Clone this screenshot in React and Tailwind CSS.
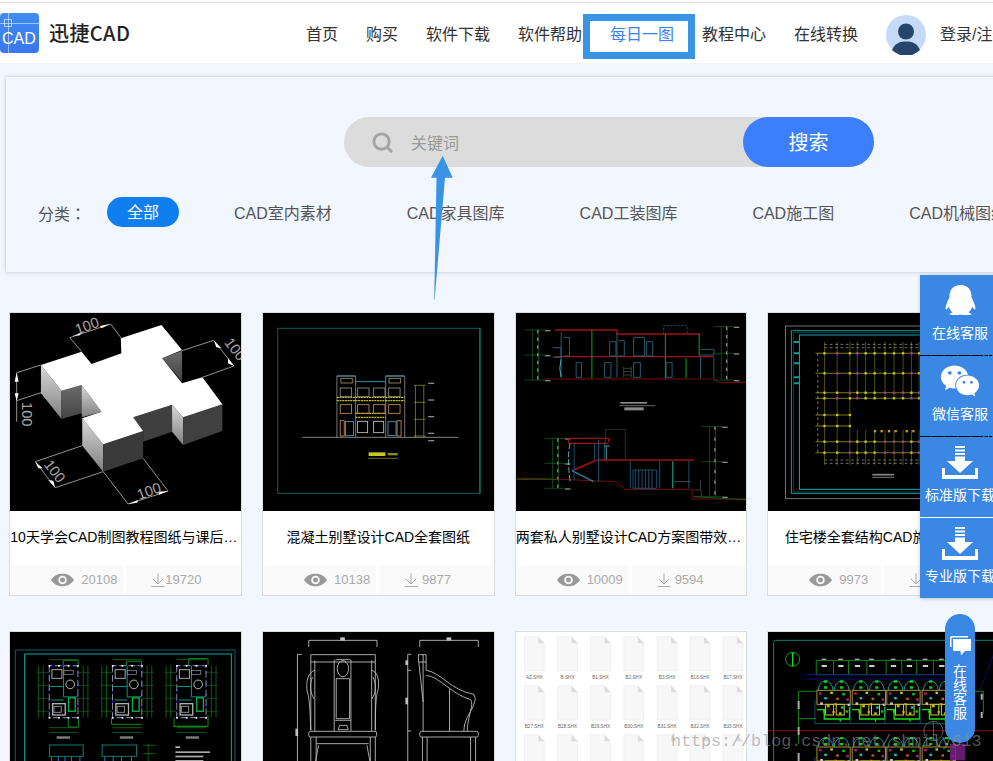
import React from "react";
import { Search } from "lucide-react";
import { FaQq, FaWeixin } from "react-icons/fa";

const range = (a, n, s) => Array.from({ length: n }, (_, i) => a + i * s);

function Frame({ box, children, bg = "#000" }) {
  return (
    <svg viewBox={box} className="block w-full h-full" preserveAspectRatio="none" style={{ background: bg }}>
      {children}
    </svg>
  );
}

function Img1() {
  const W = "#b8b8b8";
  return (
    <Frame box="30 39 693 594">
      <defs>
        <linearGradient id="g1" x1="0" x2="0" y1="0" y2="1"><stop offset="0" stopColor="#d8d8d8" /><stop offset="1" stopColor="#808080" /></linearGradient>
        <linearGradient id="g2" x1="0" x2="0" y1="0" y2="1"><stop offset="0" stopColor="#6a6a6a" /><stop offset="1" stopColor="#444" /></linearGradient>
      </defs>
      <polygon points="123,195 185,272 185,357 123,280" fill="url(#g1)" />
      <polygon points="185,272 245,255 245,340 185,357" fill="url(#g2)" />
      <polygon points="245,255 305,335 247,352 245,340" fill="url(#g1)" />
      <polygon points="247,355 310,433 310,515 247,437" fill="url(#g1)" />
      <polygon points="310,433 430,393 430,475 310,515" fill="#3a3a3a" />
      <polygon points="400,352 517,314 517,395 430,425 430,393" fill="#3f3f3f" />
      <polygon points="517,314 550,352 550,435 517,395" fill="url(#g1)" />
      <polygon points="550,352 668,313 668,393 550,435" fill="#404040" />
      <polygon points="363,115 392,152 365,162" fill="#a0a0a0" />
      <polygon points="487,175 547,152 547,245" fill="url(#g2)" />
      <polygon fill="#fff" points="123,195 245,155 275,192 365,160 363,115 485,75 547,150 487,175 547,250 608,232 668,313 550,352 517,314 400,352 430,393 310,433 247,355 305,335 245,255 185,272" />
      <g stroke={W} strokeWidth="2.4" fill="none">
        <path d="M210,113 L332,72 L365,115 M210,113 L245,155" />
        <path d="M547,152 L642,121 L703,198 L608,232" />
        <path d="M123,195 L50,218 L50,365 M123,278 L50,302" />
        <path d="M247,437 L106,485 L166,563 L310,515" />
        <path d="M310,515 L385,612 L505,573 L430,475" />
      </g>
      <g fill="#fff">
        <polygon points="218,108 245,98 240,106" /><polygon points="300,78 330,72 305,85" />
        <polygon points="642,121 665,145 650,142" /><polygon points="685,175 703,198 685,190" />
        <polygon points="50,218 56,245 44,245" /><polygon points="50,302 56,280 44,280" />
        <polygon points="106,485 128,505 115,505" /><polygon points="166,563 145,540 160,542" />
        <polygon points="385,612 415,600 412,608" /><polygon points="505,573 475,575 478,584" />
      </g>
      <g fill="#a8a8a8" fontFamily="Liberation Sans, sans-serif" fontSize="44">
        <text x="232" y="104" transform="rotate(-20 232 104)">100</text>
        <text x="672" y="128" transform="rotate(52 672 128)">100</text>
        <text x="66" y="306" transform="rotate(90 66 306)">100</text>
        <text x="130" y="494" transform="rotate(52 130 494)">100</text>
        <text x="418" y="600" transform="rotate(-20 418 600)">100</text>
      </g>
    </Frame>
  );
}

function Img2() {
  return (
    <Frame box="789 39 690 594">
      <rect x="833" y="85" width="605" height="495" fill="none" stroke="#0b5f60" strokeWidth="3" />
      <path d="M1438,85 V580" stroke="#1a8a6a" strokeWidth="3" />
      <path d="M907,412 H1373" stroke="#9a9a9a" strokeWidth="2.5" />
      <g fill="none" strokeWidth="2.5">
        <path d="M1010,412 V228 H1066 V412 M1156,412 V228 H1213 V412" stroke="#8a8a8a" />
        <path d="M1010,228 H1066 M1156,228 H1213 M1066,245 H1156" stroke="#3aa6c0" />
        <path d="M1010,292 H1213 M1010,302 H1213 M1066,340 H1156 M1066,352 H1156" stroke="#c0c020" strokeWidth="4" strokeDasharray="6 2" />
        {[1020, 1072, 1120, 1165].map((x) => <rect key={x} x={x} y="264" width="34" height="26" stroke="#8f8f8f" />)}
        {[1020, 1072, 1120, 1165].map((x) => <rect key={x} x={x} y="314" width="34" height="26" stroke="#c98f5c" />)}
        {[1072, 1120].map((x) => <rect key={x} x={x} y="364" width="30" height="34" stroke="#c9c9b8" />)}
        <rect x="1022" y="235" width="34" height="14" stroke="#a88c70" />
        <rect x="1166" y="235" width="34" height="14" stroke="#a88c70" />
        <rect x="1036" y="365" width="24" height="42" stroke="#5aa0c0" />
        <rect x="1163" y="365" width="24" height="42" stroke="#5aa0c0" />
        <rect x="1020" y="362" width="12" height="46" stroke="#c98f5c" />
        <rect x="1190" y="362" width="12" height="46" stroke="#c98f5c" />
        <path d="M1245,256 V412 M1270,256 V412 M1240,256 H1275 M1240,307 H1275 M1240,358 H1275 M1240,408 H1275" stroke="#a0a020" strokeWidth="2" />
      </g>
      <g fill="#8a8a8a">
        {[248, 298, 348, 398, 420].map((y) => <rect key={y} x="1283" y={y} width="18" height="4" />)}
      </g>
      <rect x="1105" y="457" width="50" height="11" fill="#c8c820" />
      <rect x="1162" y="459" width="30" height="7" fill="#8a8a20" />
      <path d="M1104,475 H1192" stroke="#a0a020" strokeWidth="2" />
    </Frame>
  );
}

function Img3() {
  const dimCols = [[115, 90, 240], [680, 80, 240], [175, 415, 565], [645, 380, 590]];
  return (
    <Frame box="48 39 690 594">
      <g fill="none" strokeWidth="2.5">
        <path d="M130,237 H640 L655,247 H738" stroke="#8c1010" />
        <path d="M165,90 H350 V102 H600 M165,170 H640" stroke="#a01018" strokeWidth="4" />
        <path d="M275,90 V235 M495,102 V235 M596,102 V168 M557,175 V235" stroke="#0f8a22" strokeWidth="3.5" />
        <path d="M183,95 V232 M350,100 V232 M600,170 V235 M640,172 V235 M190,112 H208 V168 H190 M328,125 H347 V168 H328 V125 M355,122 H372 V168 H355 M400,112 H432 V168 H400 Z M438,125 H457 V168 H438 Z M228,188 H244 V232 H228 Z M313,188 H332 V232 H313 Z M400,188 H420 V232 H400 Z M497,188 H515 V232 H497 Z M158,143 H183 V172 H158 M600,148 H640 V165 H600" stroke="#2c6e86" />
        <path d="M490,102 V77 H560 V102" stroke="#1c5b78" strokeDasharray="7 4" />
        <path d="M183,178 Q175,205 183,232" stroke="#58c8d8" />
        <path d="M370,205 H393 M370,215 H393 M370,225 H393 M370,200 V232 M393,200 V232" stroke="#444" />
        <path d="M357,317 H465" stroke="#a0a0a0" strokeWidth="2" />
      </g>
      <g fill="#8a8a8a">
        <rect x="360" y="306" width="80" height="5" />
        <rect x="372" y="322" width="58" height="9" />
      </g>
      {dimCols.map(([x, y1, y2], i) => (
        <g key={i}>
          <path d={`M${x},${y1} V${y2} M${x - 18},${y1} V${y2} M${x - 42},${y1} H${x + 20} M${x - 42},${(y1 + y2) / 2} H${x + 20} M${x - 42},${y2} H${x + 20}`} stroke="#0d6a1e" strokeWidth="2" fill="none" />
          {range(y1, 7, (y2 - y1) / 6.5).map((y) => <rect key={y} x={x - 4} y={y} width="4" height="10" fill="#8a8a8a" />)}
          <rect x={x + 20} y={y1} width="16" height="4" fill="#8a8a8a" />
          <rect x={x + 20} y={(y1 + y2) / 2} width="16" height="4" fill="#8a8a8a" />
          <rect x={x + 20} y={y2} width="16" height="4" fill="#8a8a8a" />
        </g>
      ))}
      <g fill="none" strokeWidth="2.5">
        <path d="M50,535 H110 L345,545 L375,568 H575 V597 H738" stroke="#8c1010" />
        <path d="M205,430 V415 H325 V425 M290,480 H580 M205,430 H325" stroke="#a01018" strokeWidth="4" />
        <path d="M215,512 L290,480" stroke="#a01018" strokeWidth="5" />
        <path d="M215,512 L280,545" stroke="#2e7ea0" strokeWidth="4" />
        <path d="M222,430 V540 M283,430 V480 M295,420 V545 M312,425 V478 M390,482 V565 M478,482 V565 M565,482 V565 M398,510 H468 V565 H398 Z M405,510 V565 M415,510 V565 M425,510 V565 M435,510 V565 M445,510 V565 M455,510 V565" stroke="#1e5f80" />
        <path d="M210,430 Q200,470 210,545" stroke="#58c8d8" strokeDasharray="18 6" />
        <path d="M316,388 H375 V478 M316,388 V428" stroke="#333" />
        <path d="M312,438 H328 M318,440 V478" stroke="#58c8d8" />
        <path d="M517,484 V565" stroke="#19d8a8" />
        <path d="M520,545 H570" stroke="#555" />
        <path d="M50,538 H170 M580,590 L738,600 " stroke="#0d6a1e" />
        <path d="M580,570 H602 V590 H580 M600,540 V570" stroke="#444" />
      </g>
    </Frame>
  );
}

function Img4() {
  const xs = [972, 1010, 1048, 1070, 1095, 1122, 1153, 1180, 1207, 1232, 1255, 1290, 1330, 1370, 1410, 1450];
  const ys = [160, 220, 278, 295, 425, 458];
  const ysShort = [345, 378];
  return (
    <Frame box="803 39 690 594">
      <g fill="none">
        <rect x="855" y="78" width="620" height="518" stroke="#8a8a8a" strokeWidth="2.5" />
        <rect x="873" y="92" width="590" height="488" stroke="#0f9a9a" strokeWidth="3" />
        <rect x="880" y="98" width="575" height="478" stroke="#0c5a5a" strokeWidth="2" />
        <rect x="897" y="105" width="550" height="463" stroke="#10a8a8" strokeWidth="3" />
        <path d="M880,126 H896 M880,160 H896 M880,190 H896 M880,232 H896 M880,250 H896" stroke="#0f9a9a" strokeWidth="6" />
        {xs.map((x, i) => <path key={x} d={i < 3 ? `M${x},125 V495` : `M${x},125 V295 M${x},390 V495`} stroke="#5c5c10" strokeWidth="2.5" />)}
        {ys.map((y) => <path key={y} d={`M945,${y} H1493`} stroke="#7a7a14" strokeWidth="3" />)}
        {ysShort.map((y) => <path key={y} d={`M945,${y} H1050`} stroke="#7a7a14" strokeWidth="3" />)}
        <path d="M972,133 H1493 M972,143 H1493 M972,480 H1493 M972,490 H1493 M952,160 V462" stroke="#a8a8a8" strokeWidth="2" strokeDasharray="8 8" />
        <path d="M1115,532 H1180" stroke="#bbb" strokeWidth="2" />
        <path d="M1115,524 H1180" stroke="#888" strokeWidth="5" />
      </g>
      {xs.flatMap((x) => ys.map((y) => <rect key={`${x}-${y}`} x={x - 3.5} y={y - 3.5} width="7" height="7" fill={(x + y) % 3 ? "#c8c820" : "#a838a8"} />))}
      {xs.slice(0, 3).flatMap((x) => ysShort.map((y) => <rect key={`${x}-${y}`} x={x - 3.5} y={y - 3.5} width="7" height="7" fill="#c8c820" />))}
      {[1123, 1143, 1165, 1185, 1218, 1238].map((x) => <rect key={x} x={x - 3.5} y="390" width="7" height="7" fill="#c8a020" />)}
    </Frame>
  );
}

function Plan({ x, y, w, h }) {
  return (
    <g>
      <path d={`M${x - 32},${y} V${y + h} M${x - 18},${y} V${y + h} M${x + w + 16},${y} V${y + h} M${x + w + 30},${y} V${y + h} M${x},${y - 18} H${x + w} M${x},${y + h + 30} H${x + w} M${x},${y + h + 44} H${x + w}`} stroke="#0f8a22" strokeWidth="2" fill="none" />
      {range(y + 20, 4, h / 4).map((yy) => <path key={yy} d={`M${x - 36},${yy} H${x} M${x + w},${yy} H${x + w + 34}`} stroke="#0c6a1c" strokeWidth="2" />)}
      <rect x={x} y={y} width={w} height={h} fill="none" stroke="#1818b8" strokeWidth="4" strokeDasharray="10 24" />
      <path d={`M${x},${y} V${y + h} H${x + w} V${y} H${x}`} fill="none" stroke="#c8c8c8" strokeWidth="2" strokeDasharray="20 8" />
      <path d={`M${x + w * 0.5},${y} V${y + h * 0.6} M${x},${y + h * 0.4} H${x + w * 0.5} M${x + w * 0.5},${y + h * 0.6} H${x + w} M${x + 6},${y + h * 0.66} H${x + w * 0.5}`} stroke="#0c9888" strokeWidth="3" fill="none" />
      <rect x={x + 8} y={y + 12} width="30" height="26" fill="none" stroke="#a8a8a8" strokeWidth="3" />
      <rect x={x + 10} y={y + h - 42} width="38" height="34" fill="none" stroke="#b0b0b0" strokeWidth="4" />
      <rect x={x + 14} y={y + h - 34} width="22" height="18" fill="none" stroke="#888" strokeWidth="3" />
      <rect x={x + w - 28} y={y + h * 0.62} width="20" height="40" fill="none" stroke="#10b040" strokeWidth="4" />
      <circle cx={x + w * 0.73} cy={y + h * 0.36} r="13" fill="none" stroke="#b8b8b8" strokeWidth="3" />
      <rect x={x + 44} y={y + 14} width="28" height="12" fill="none" stroke="#999" strokeWidth="2" />
      {range(x, 4, w / 3).flatMap((xx) => [y, y + h].map((yy) => <rect key={`${xx}${yy}`} x={xx - 2} y={yy - 2} width="5" height="5" fill="#fff" />))}
    </g>
  );
}

function Img5() {
  return (
    <Frame box="30 65 693 594">
      <rect x="46" y="119" width="660" height="500" fill="none" stroke="#0b5f60" strokeWidth="3" />
      <rect x="74" y="131" width="621" height="480" fill="none" stroke="#10a8a8" strokeWidth="3" />
      <Plan x={148} y={166} w={86} h={156} />
      <Plan x={338} y={166} w={88} h={156} />
      <Plan x={531} y={166} w={88} h={156} />
      <path d="M190,165 V150 H235 V165 M380,165 V153 H425 V165 M567,165 V145 H625 V165 M205,325 V350 H236 V325 M335,322 V342 H425 M523,322 V348 H625 V315 M520,348 H625" fill="none" stroke="#0f8a22" strokeWidth="3" />
      <rect x="170" y="378" width="40" height="7" fill="#808080" />
      <rect x="360" y="378" width="40" height="7" fill="#808080" />
      <rect x="558" y="378" width="40" height="7" fill="#808080" />
      <rect x="149" y="404" width="101" height="34" fill="none" stroke="#0e7a70" strokeWidth="3" />
      <rect x="307" y="404" width="103" height="34" fill="none" stroke="#0e7a70" strokeWidth="3" />
      <path d="M155,438 V453 M175,438 V453 M195,438 V453 M215,438 V453 M240,438 V453 M315,438 V453 M340,438 V453 M365,438 V453 M395,438 V453" stroke="#2a7ac0" strokeWidth="3" />
      <path d="M430,405 H468 M430,430 H468 M445,400 V453" stroke="#0f8a22" strokeWidth="2" />
      <rect x="527" y="408" width="14" height="5" fill="#bbb" />
      <rect x="527" y="423" width="104" height="5" fill="#aaa" />
      <rect x="527" y="436" width="84" height="5" fill="#aaa" />
      <rect x="527" y="449" width="84" height="5" fill="#aaa" />
    </Frame>
  );
}

function Img6() {
  return (
    <Frame box="789 65 690 594">
      <g fill="none" stroke="#c8c8c8" strokeWidth="2.5">
        <path d="M926,110 V90 H1130 V110 M1258,110 V90 H1433 V110" />
        <path d="M892,132 H905 M892,132 V460 M1222,132 H1232 M1222,132 V460 M1222,180 H1232 M1222,362 H1232" />
        <path d="M932,133 H1125 V155 H932 Z M944,150 V362 M1114,150 V362 M1002,148 V362 M1052,148 V362 M1006,148 H1050" />
        <ellipse cx="1028" cy="175" rx="17" ry="24" />
        <path d="M1008,205 H1048 V325 H1008 Z M1005,330 H1052" />
        <path d="M1014,358 L1018,345 H1040 L1044,358 Z" />
        <path d="M932,155 V360 M944,180 C925,185 915,215 922,245 C930,275 930,320 932,360 M1125,155 V360 M1114,180 C1135,185 1140,220 1130,250 C1125,280 1125,320 1125,360 M937,200 C928,220 930,250 942,265 M1118,200 C1128,220 1128,250 1114,265" />
        <rect x="926" y="363" width="203" height="17" rx="5" />
        <path d="M932,380 V460 M948,380 V460 M1110,380 V460 M1125,380 V460 M948,400 H1105 M955,405 L945,460 M1100,405 L1110,460" />
        <path d="M1254,133 H1277 V155 H1254 Z M1268,133 V362 M1255,155 L1268,275 M1277,155 V180 C1320,185 1350,240 1420,252 L1424,265 C1420,300 1390,320 1390,362 M1277,195 C1320,200 1350,250 1410,268 C1422,280 1400,320 1400,362 M1347,235 V362" />
        <rect x="1258" y="363" width="175" height="17" rx="5" />
        <path d="M1266,380 V460 M1280,380 V460 M1410,380 V460 M1425,380 V460" />
      </g>
      <g fill="#c0c0c0">
        <rect x="1020" y="81" width="14" height="10" />
        <rect x="1338" y="81" width="14" height="10" />
        <rect x="886" y="355" width="8" height="22" />
        <rect x="1215" y="262" width="8" height="20" />
        <rect x="1215" y="150" width="8" height="14" />
      </g>
    </Frame>
  );
}

function Img7() {
  const cols = [72, 172, 271, 371, 471, 570, 669];
  const labels = [
    ["AZ.SHX", "B.SHX", "B1.SHX", "B2.SHX", "B3.SHX", "B16.SHX", "B17.SHX"],
    ["B27.SHX", "B28.SHX", "B29.SHX", "B30.SHX", "B31.SHX", "B32.SHX", "B33.SHX"],
    [],
  ];
  return (
    <Frame box="47 65 693 594" bg="#fff">
      {[79, 226, 373].map((y, r) =>
        cols.map((x, c) => (
          <g key={`${r}-${c}`}>
            <path d={`M${x},${y} H${x + 42} L${x + 60},${y + 20} V${y + 103} H${x} Z`} fill="#f7f7f7" stroke="#e6e6e6" strokeWidth="1.5" />
            <path d={`M${x + 42},${y} L${x + 60},${y + 20} H${x + 42} Z`} fill="#dcdcdc" />
            {labels[r][c] && (
              <text x={x + 30} y={y + 127} textAnchor="middle" fontSize="14" fill="#666" fontFamily="Liberation Sans, sans-serif">{labels[r][c]}</text>
            )}
          </g>
        ))
      )}
    </Frame>
  );
}

function Block({ x, y }) {
  const dots = [
    [6, 6, "#d02090"], [22, 20, "#19e0e0"], [40, 4, "#e0e020"], [58, 22, "#e07020"], [76, 8, "#14e014"], [88, 24, "#d02090"],
    [10, 36, "#e8e8e8"], [30, 44, "#e0e020"], [52, 38, "#d09020"], [72, 48, "#19e0e0"], [92, 40, "#e8e8e8"], [18, 60, "#14e014"],
    [46, 62, "#d09020"], [66, 66, "#e0e020"], [86, 60, "#14e014"],
  ];
  return (
    <g transform={`translate(${x} ${y})`} fill="none">
      <path d="M4,0 a22,28 0 0 1 44,0 M52,0 a22,28 0 0 1 44,0" stroke="#0f988a" strokeWidth="3" />
      <path d="M26,-30 V0 M74,-30 V0" stroke="#14d014" strokeWidth="9" strokeDasharray="7 11" />
      <rect x="0" y="0" width="100" height="42" stroke="#a89038" strokeWidth="3" />
      {dots.map(([a, b, f], i) => <rect key={i} x={a} y={b} width="8" height="7" fill={f} opacity=".85" />)}
      <rect x="26" y="42" width="24" height="32" stroke="#c8c820" strokeWidth="3" />
      <rect x="58" y="42" width="24" height="32" stroke="#c8c820" strokeWidth="3" />
      <path d="M0,58 H22 V86 H70 V94 M98,50 V86 H70" stroke="#14e014" strokeWidth="4" />
      <path d="M-6,30 V100 H100" stroke="#0a7a90" strokeWidth="2" />
    </g>
  );
}

function Img8() {
  return (
    <Frame box="803 65 693 594">
      <path d="M820,480 V96 Q820,90 826,90 H1496" fill="none" stroke="#0b7f70" strokeWidth="3" />
      <circle cx="877" cy="147" r="21" fill="none" stroke="#14c014" strokeWidth="2.5" />
      <path d="M877,126 V168" stroke="#14e014" strokeWidth="4" />
      <path d="M948,150 H1340 M948,193 H1340 M948,150 V193 M1000,150 V193 M1045,150 V193 M1100,150 V193 M1158,150 V193 M1205,150 V193 M1250,150 V193 M1300,150 V193" fill="none" stroke="#14a014" strokeWidth="2.5" />
      {[972, 1022, 1072, 1115, 1180, 1228, 1276, 1325].map((x) => <g key={x}><rect x={x - 8} y="164" width="16" height="6" fill="#ccc" /><rect x={x - 8} y="145" width="14" height="4" fill="#aaa" /></g>)}
      <path d="M918,193 H1340 M918,206 H1340" stroke="#1010a0" strokeWidth="2.5" />
      <path d="M1440,240 L1493,100" stroke="#1010a0" strokeWidth="2" />
      <path d="M895,243 H948 M895,243 V400 M895,325 H948 M1340,243 H1450 V310" fill="none" stroke="#14a014" strokeWidth="2.5" />
      <path d="M803,361 H1493" stroke="#a00808" strokeWidth="2.5" />
      {[950, 1056, 1160, 1266].flatMap((x) => [240, 410].map((y) => <Block key={`${x}${y}`} x={x} y={y} />))}
      <circle cx="1300" cy="362" r="29" fill="none" stroke="#888" strokeWidth="2" />
      <path d="M1300,333 V391" stroke="#888" strokeWidth="2" />
      <rect x="1350" y="400" width="46" height="50" fill="#80208a" opacity=".8" />
      <rect x="892" y="272" width="6" height="24" fill="#aaa" /><rect x="892" y="350" width="6" height="24" fill="#aaa" /><rect x="892" y="428" width="6" height="24" fill="#aaa" />
      <rect x="1442" y="250" width="6" height="18" fill="#aaa" /><rect x="1442" y="305" width="6" height="18" fill="#aaa" />
    </Frame>
  );
}

function Eye() {
  return (
    <svg viewBox="0 0 24 14" className="w-[23px] h-[14px] shrink-0">
      <path fillRule="evenodd" fill="#999" d="M0,7 C3,2.5 7,0.5 12,0.5 C17,0.5 21,2.5 24,7 C21,11.5 17,13.5 12,13.5 C7,13.5 3,11.5 0,7 Z M12,2.5 A4.5,4.5 0 1 0 12,11.5 A4.5,4.5 0 1 0 12,2.5 Z" />
      <circle cx="12" cy="7" r="2.6" fill="#999" />
    </svg>
  );
}

function DownSmall() {
  return (
    <svg viewBox="0 0 14 14" className="w-[14px] h-[14px] shrink-0" fill="none" stroke="#aaa" strokeWidth="1">
      <path d="M7,0.5 V11 M2,6 L7,11 L12,6 M0.5,13.5 H13.5" />
    </svg>
  );
}

const cards = [
  { img: <Img1 />, title: "10天学会CAD制图教程图纸与课后习题集下载", v: "20108", d: "19720", gap: false },
  { img: <Img2 />, title: "混凝土别墅设计CAD全套图纸", v: "10138", d: "9877", gap: true },
  { img: <Img3 />, title: "两套私人别墅设计CAD方案图带效果图下载", v: "10009", d: "9594", gap: true },
  { img: <Img4 />, title: "住宅楼全套结构CAD施工图设计", v: "9973", d: "9456", gap: true },
  { img: <Img5 />, title: "三层别墅建筑设计CAD图纸", v: "9850", d: "9412", gap: true },
  { img: <Img6 />, title: "中式圈椅CAD图纸", v: "9720", d: "9301", gap: true },
  { img: <Img7 />, title: "CAD常用字体库", v: "9688", d: "9255", gap: true },
  { img: <Img8 />, title: "联排别墅CAD施工图", v: "9601", d: "9180", gap: true },
];

function Card({ c }) {
  return (
    <div className="border border-[#dcdcdc] bg-white">
      <div className="h-[198px] bg-black overflow-hidden">{c.img}</div>
      <div className="h-[54px] flex items-center justify-center text-[14px] leading-[20px] text-black pb-[2px]">
        <span className="block max-w-full truncate">{c.title}</span>
      </div>
      <div className="h-[30px] flex gap-[3px] text-[13px] leading-[20px] text-[#aaa]">
        <div className="w-[113px] bg-[#fafafa] flex items-center gap-[7px] pl-[41px]">
          <Eye />
          <span>{c.v}</span>
        </div>
        <div className="flex-1 bg-[#fafafa] flex items-center pl-[25px]">
          <DownSmall />
          <span className={c.gap ? "ml-[4px]" : ""}>{c.d}</span>
        </div>
      </div>
    </div>
  );
}

function DownloadBig() {
  return (
    <svg viewBox="0 0 36 33" className="w-[36px] h-[33px]" fill="#fff">
      <rect x="13" y="0" width="10" height="2" />
      <rect x="13" y="3.5" width="10" height="2" />
      <rect x="13" y="7" width="10" height="2" />
      <polygon points="13,10.5 23,10.5 23,15 31,15 18,27 5,15 13,15" />
      <path d="M0,22 H3 V29 H33 V22 H36 V33 H0 Z" />
    </svg>
  );
}

function SideItem({ icon, label }) {
  return (
    <div className="h-[80px] bg-[#3b87e4] flex flex-col items-center text-white text-[14px] leading-[20px]">
      <div className="h-[48px] flex items-center justify-center w-full pt-[2px]">{icon}</div>
      <div className="whitespace-nowrap">{label}</div>
    </div>
  );
}

export default function App() {
  return (
    <div className="relative w-[993px] h-[761px] overflow-hidden bg-[#f2f6fe] font-['Liberation_Sans','Noto_Sans_CJK_SC',sans-serif]">
      <div className="h-[2px] bg-white" />
      <div className="h-px bg-[#e2e2e2]" />
      <header className="h-[60px] bg-white flex items-center whitespace-nowrap w-[1040px] pt-[4px]">
        <div className="relative shrink-0 mb-[4px] w-[39px] h-[40px] rounded-[4px] overflow-hidden bg-gradient-to-b from-[#3f8cf5] to-[#3a76ee] text-white">
          <span className="absolute left-0 right-0 top-[10px] h-px bg-white/50" />
          <span className="absolute left-[8px] top-0 bottom-0 w-px bg-white/50" />
          <span className="absolute left-[4px] top-[6px] w-[8px] h-[8px] border border-white/60" />
          <span className="absolute left-[2px] top-[14px] text-[16px] leading-[24px]">CAD</span>
        </div>
        <div className="ml-[10px] mb-[4px] shrink-0 text-[20px] leading-[28px] font-medium text-[#222] tracking-[0.4px] w-[80px] font-['Noto_Sans_CJK_SC',sans-serif]">迅捷CAD</div>
        <nav className="ml-[177px] shrink-0 flex items-center gap-7 text-[16px] leading-[24px] text-[#333]">
          <span>首页</span>
          <span>购买</span>
          <span>软件下载</span>
          <span>软件帮助</span>
          <span className="text-[#3a7ffc]">每日一图</span>
          <span>教程中心</span>
          <span>在线转换</span>
          <svg viewBox="0 0 40 40" className="w-[40px] h-[40px]">
            <circle cx="20" cy="20" r="20" fill="#c5daf7" />
            <circle cx="20" cy="16.5" r="8" fill="#274569" />
            <path d="M6,35 C9,28 14,26.5 20,26.5 C26,26.5 31,28 34,35 A20,20 0 0 1 6,35 Z" fill="#274569" />
          </svg>
        </nav>
        <span className="ml-[14px] shrink-0 text-[16px] leading-[24px] text-[#333]">登录/注册</span>
      </header>

      <section className="mt-[14px] ml-[6px] w-[1020px] h-[195px] bg-[#f2f6fe] shadow-[0_0_4px_rgba(120,125,150,0.45)] pt-[40px]">
        <div className="ml-[338px] w-[530px] h-[50px] rounded-full bg-[#dcdcdc] flex items-center">
          <Search size={23} strokeWidth={3} color="#a3a3a3" className="ml-[27px]" />
          <span className="ml-[17px] pt-[4px] text-[16px] leading-[24px] text-[#999]">关键词</span>
          <button className="ml-auto w-[131px] h-[50px] pt-[2px] rounded-full bg-[#3b7ffc] text-white text-[20px] leading-[28px]">搜索</button>
        </div>
        <div className="mt-[30px] pl-[32px] h-[30px] flex items-center whitespace-nowrap text-[16px] leading-[24px] text-[#555]">
          <span className="w-[69px] pt-[4px]">分类<span className="font-['Noto_Sans_CJK_TC',sans-serif]">：</span></span>
          <span className="w-[72px] h-[30px] pt-[2px] rounded-full bg-[#0f7eee] text-white flex items-center justify-center">全部</span>
          <div className="ml-[55px] pt-[4px] flex gap-[75px]">
            <span>CAD室内素材</span>
            <span>CAD家具图库</span>
            <span>CAD工装图库</span>
            <span>CAD施工图</span>
            <span>CAD机械图纸</span>
          </div>
        </div>
      </section>

      <main className="mt-[40px] pl-[9.33px] w-[1010px] grid grid-cols-[repeat(4,232.67px)] gap-x-5 gap-y-[35px]">
        {cards.map((c, i) => <Card key={i} c={c} />)}
      </main>

      {/* annotation box around the selected nav item */}
      <div className="absolute left-[583px] top-[14px] w-[112px] h-[45px] border-[7px] border-[#3a94e6]" />

      {/* annotation arrow */}
      <svg className="absolute left-[425px] top-[150px] w-[35px] h-[155px]" viewBox="425 150 35 155">
        <polygon points="442.7,155.7 452.7,177.7 445,177.7 434.6,300 434.2,300 436.5,177.7 431,177.7" fill="#3a94e6" />
      </svg>

      {/* right floating panel */}
      <div className="absolute left-[920px] top-[275px] w-[80px] flex flex-col gap-px shadow-[0_1px_4px_rgba(0,0,0,0.2)]">
        <SideItem icon={<FaQq color="#fff" className="w-[31px] h-[30px]" preserveAspectRatio="none" />} label="在线客服" />
        <SideItem icon={<FaWeixin size={40} color="#fff" />} label="微信客服" />
        <SideItem icon={<DownloadBig />} label="标准版下载" />
        <SideItem icon={<DownloadBig />} label="专业版下载" />
      </div>

      {/* floating chat pill */}
      <div className="absolute left-[945px] top-[614px] w-[30px] h-[129px] rounded-full bg-[#3b87e4] flex flex-col items-center pt-[22px] text-white text-[14px] leading-[14px]">
        <svg viewBox="0 0 21 20" className="w-[21px] h-[20px]" fill="#fff">
          <path d="M0,2 Q0,0 2,0 H18 V1.5 H2 Q1.5,1.5 1.5,2 V11 H0 Z" />
          <path d="M3,3 H21 V14 Q21,15 20,15 H15 L11,19.5 L10.5,15 H4 Q3,15 3,14 Z" />
        </svg>
        <div className="mt-[8px] w-[14px] text-center break-all">在线客服</div>
      </div>

      {/* watermark */}
      <div className="absolute left-[671px] top-[730px] text-[16.7px] leading-[24px] text-[#909090]/60 font-['Liberation_Mono',monospace] whitespace-nowrap">
        https://blog.csdn.net/shmily613
      </div>
    </div>
  );
}
